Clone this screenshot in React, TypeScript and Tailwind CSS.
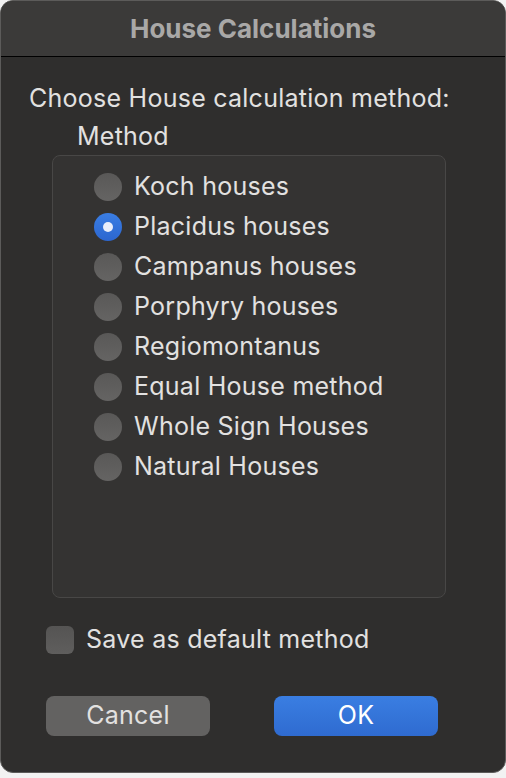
import React, { useState } from 'react';

const methods = [
  'Koch houses',
  'Placidus houses',
  'Campanus houses',
  'Porphyry houses',
  'Regiomontanus',
  'Equal House method',
  'Whole Sign Houses',
  'Natural Houses',
];

function Radio({ checked }: { checked: boolean }) {
  return checked ? (
    <span className="flex h-[28px] w-[28px] items-center justify-center rounded-full bg-gradient-to-b from-[#3a7ee4] to-[#2c66cf]">
      <span className="h-[10px] w-[10px] rounded-full bg-[#e9eefa]" />
    </span>
  ) : (
    <span className="h-[28px] w-[28px] rounded-full bg-gradient-to-b from-[#595857] to-[#656463]" />
  );
}

export default function App() {
  const [selected, setSelected] = useState(1);
  const [saveDefault, setSaveDefault] = useState(false);

  return (
    <div className="h-[778px] w-[506px] bg-[#f2f2f2] font-['Inter',sans-serif]">
      <div className="h-[773px] overflow-hidden rounded-[13px] border border-[#5c5b5a] bg-[#2f2e2d]">
        <div className="flex h-[56px] items-center justify-center border-b border-black bg-[#3b3a39]">
          <h1 className="text-[26px] font-bold text-[#a9a8a7]">House Calculations</h1>
        </div>

        <div className="px-[28px] pt-[22px] text-[25px] tracking-[0.25px] text-[#e2e1e0]">
          <p className="leading-[38px]">Choose House calculation method:</p>
          <p className="ml-[48px] leading-[38px]">Method</p>

          <div className="ml-[23px] h-[443px] w-[394px] rounded-[8px] border border-[#484746] bg-[#343332] pl-[41px] pt-[11px]">
            {methods.map((m, i) => (
              <button
                key={m}
                onClick={() => setSelected(i)}
                className="flex h-[40px] items-center gap-[12px] text-left"
              >
                <Radio checked={selected === i} />
                <span>{m}</span>
              </button>
            ))}
          </div>

          <button
            onClick={() => setSaveDefault(!saveDefault)}
            className="mt-[28px] flex h-[28px] items-center gap-[12px] pl-[17px]"
          >
            <span className="h-[28px] w-[28px] rounded-[6px] bg-gradient-to-b from-[#555453] to-[#5f5e5d]" />
            <span>Save as default method</span>
          </button>

          <div className="mt-[42px] flex gap-[64px] pl-[17px]">
            <button className="h-[40px] w-[164px] rounded-[8px] bg-[#636261] text-[#e2e1e0]">Cancel</button>
            <button className="h-[40px] w-[164px] rounded-[8px] bg-gradient-to-b from-[#3a7ee2] to-[#2f6bd0] text-white">
              OK
            </button>
          </div>
        </div>
      </div>
    </div>
  );
}
